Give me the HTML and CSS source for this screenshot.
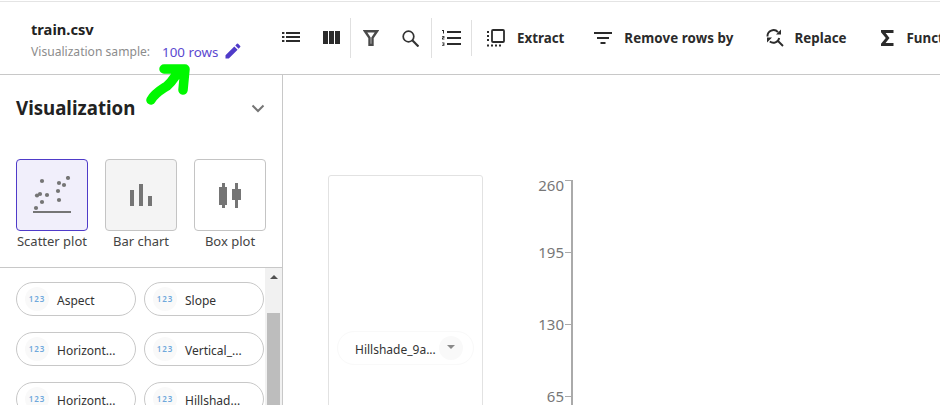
FILE: index.html
```html
<!DOCTYPE html>
<html>
<head>
  <title>train.csv</title>
  <meta name="viewport" content="width=device-width, initial-scale=1">
  <link rel="stylesheet" href="styles.css">
</head>
<body>
  <div class="app">
    <div class="topbar">
      <div class="dataset">
        <div class="dataset-name">train.csv</div>
        <div class="dataset-sample">
          <span class="sample-label">Visualization sample:</span>
          <span class="sample-link">100 rows</span>
          <svg class="pencil" width="16" height="16" viewBox="0 0 16 16"><path fill="#4f3bc9" d="M0.5 12.2V15.5H3.8L12.6 6.7 9.3 3.4ZM15.2 4.1a.9.9 0 0 0 0-1.2L13.1.8a.9.9 0 0 0-1.2 0L10.3 2.4 13.6 5.7Z"/></svg>
        </div>
      </div>
      <div class="tools">
        <button class="tool tool-list">
          <svg width="18" height="10" viewBox="0 0 18 10"><path fill="#2b2b2b" d="M0 0h2.400v2H0zM4 0h14v2H4zM0 4h2.400v2H0zM4 4h14v2H4zM0 8h2.400v2H0zM4 8h14v2H4z"/></svg>
        </button>
        <button class="tool tool-columns">
          <svg width="17" height="13" viewBox="0 0 17 13"><path fill="#2b2b2b" d="M0 0h5v13H0zM6 0h5v13H6zM12 0h5v13h-5z"/></svg>
        </button>
        <span class="sep"></span>
        <button class="tool tool-filter">
          <svg width="16" height="16" viewBox="0 0 16 16"><path fill="none" stroke="#4a4a4a" stroke-width="2.400" d="M2 1.200h12L9.500 7.800V15H6.500V7.800Z"/></svg>
        </button>
        <button class="tool tool-search">
          <svg width="17" height="17" viewBox="0 0 17 17"><circle cx="6.500" cy="6.500" r="5.300" fill="none" stroke="#333" stroke-width="1.700"/><path stroke="#333" stroke-width="2.200" d="M10.300 10.300L16.500 16.500"/></svg>
        </button>
        <span class="sep"></span>
        <button class="tool tool-number">
          <svg width="19" height="16" viewBox="0 0 19 16"><path fill="#2b2b2b" d="M5 1h14v2H5zM5 7h14v2H5zM5 13h14v2H5zM0 0h2v3.400H1V1H0zM0 6h2.400v2H1v.6h1.400v.8H0V7.400h1.400V6.800H0zM0 12.500h2.400v3.300H0V15h1.400v-.4H.6v-.7h.8v-.6H0z"/></svg>
        </button>
        <span class="sep sep-short"></span>
        <button class="tool tool-text tool-extract">
          <svg width="18" height="18" viewBox="0 0 18 18"><rect x="5" y="1" width="12" height="12" rx="1" fill="none" stroke="#2b2b2b" stroke-width="1.800"/><path fill="#2b2b2b" d="M0 2h2v2H0zM0 6h2v2H0zM0 10h2v2H0zM0 15.500h2v2H0zM4 15.500h2v2H4zM8 15.500h2v2H8zM12 15.500h2v2h-2z"/></svg>
          <span>Extract</span>
        </button>
        <button class="tool tool-text tool-remove">
          <svg width="18" height="12" viewBox="0 0 18 12"><path fill="#2b2b2b" d="M0 0h18v2H0zM3 5h12v2H3zM6.500 10h5v2h-5z"/></svg>
          <span>Remove rows by</span>
        </button>
        <button class="tool tool-text tool-replace">
          <svg width="18" height="18" viewBox="0 0 18 18"><path fill="none" stroke="#2b2b2b" stroke-width="1.900" d="M1.500 7.500A6 6 0 0 1 12 3.200M13.200 9A6 6 0 0 1 3.800 12.600M11.500 11.500L17 17"/><path fill="#2b2b2b" d="M10 5.500h5V.5zM1 8.500h5l-5 5z"/></svg>
          <span>Replace</span>
        </button>
        <button class="tool tool-text tool-sigma">
          <svg width="13" height="16" viewBox="0 0 13 16"><path fill="#2b2b2b" d="M0 0h12.500v3H4.600L8.500 8 4.600 13h7.900v3H0v-2.200L4.800 8 0 2.200Z"/></svg>
          <span>Functions</span>
        </button>
      </div>
    </div>

    <div class="main">
      <div class="sidebar">
        <div class="side-head">
          <h2>Visualization</h2>
          <svg width="14" height="9" viewBox="0 0 14 9"><path fill="none" stroke="#757575" stroke-width="2" d="M1.500 1.500L7 7l5.500-5.500"/></svg>
        </div>
        <div class="chart-types">
          <div class="chart-type">
            <div class="chart-tile tile-active">
              <svg width="38" height="38" viewBox="0 0 38 38"><g fill="#757575"><circle cx="9" cy="5" r="2.100"/><circle cx="26" cy="7" r="2.100"/><circle cx="31" cy="9" r="2.100"/><circle cx="35" cy="2" r="2.100"/><circle cx="25" cy="15" r="2.100"/><circle cx="7" cy="18" r="2.100"/><circle cx="4" cy="19.500" r="2.100"/><circle cx="14" cy="19" r="2.100"/><circle cx="9" cy="26" r="2.100"/><circle cx="26" cy="24" r="2.100"/><circle cx="3" cy="32" r="2.100"/></g><path fill="#757575" d="M0 35h38v2H0z"/></svg>
            </div>
            <span>Scatter plot</span>
          </div>
          <div class="chart-type">
            <div class="chart-tile tile-hover">
              <svg width="22" height="22" viewBox="0 0 22 22"><path fill="#757575" d="M0 6h4v16H0zM9 0h4v22H9zM18 12h4v10h-4z"/></svg>
            </div>
            <span>Bar chart</span>
          </div>
          <div class="chart-type">
            <div class="chart-tile">
              <svg width="22" height="25" viewBox="0 0 22 25"><path fill="#757575" d="M3 0h3v4h2v18H6v3H3v-3H0V4h3zM16 0h3v6h3v11h-3v8h-3v-8h-3V6h3z"/></svg>
            </div>
            <span>Box plot</span>
          </div>
        </div>
        <div class="fields">
          <div class="field-grid">
            <div class="field"><span class="field-badge">123</span><span class="field-name">Aspect</span></div>
            <div class="field"><span class="field-badge">123</span><span class="field-name">Slope</span></div>
            <div class="field"><span class="field-badge">123</span><span class="field-name">Horizont...</span></div>
            <div class="field"><span class="field-badge">123</span><span class="field-name">Vertical_...</span></div>
            <div class="field"><span class="field-badge">123</span><span class="field-name">Horizont...</span></div>
            <div class="field"><span class="field-badge">123</span><span class="field-name">Hillshad...</span></div>
          </div>
          <div class="scrollbar">
            <div class="scroll-arrow"></div>
            <div class="scroll-thumb"></div>
          </div>
        </div>
      </div>

      <div class="canvas">
        <div class="y-shelf">
          <div class="y-pill">
            <span class="y-pill-name">Hillshade_9a...</span>
            <span class="y-pill-caret"></span>
          </div>
        </div>
        <div class="axis">
          <div class="tick tick-top"><span>260</span><i></i></div>
          <div class="tick"><span>195</span><i></i></div>
          <div class="tick"><span>130</span><i></i></div>
          <div class="tick"><span>65</span><i></i></div>
        </div>
      </div>
    </div>

    <svg class="arrow" width="52" height="44" viewBox="0 0 52 44"><path fill="none" stroke="#00f800" stroke-width="9.500" stroke-linecap="round" stroke-linejoin="round" d="M8 38C12 31 18 28 24 24 30 19 32 14 36 9M21 7H42L40 28"/></svg>
  </div>
</body>
</html>
```

FILE: styles.css
```css
* {
  box-sizing: border-box;
}

body {
  margin: 0;
  padding-top: 1px;
  font-family: "Noto Sans", sans-serif;
  color: #222;
  background: #fff;
}

.app {
  position: relative;
  width: 940px;
  height: 404px;
  overflow: hidden;
  display: flex;
  flex-direction: column;
  border-top: 1px solid #e4e4e4;
}

/* top bar */
.topbar {
  flex: none;
  height: 73px;
  display: flex;
  border-bottom: 1px solid #c8c8c8;
}

.dataset {
  flex: none;
  width: 282px;
  padding: 16px 0 0 31px;
}

.dataset-name {
  font-size: 14.67px;
  font-weight: 700;
  line-height: 22px;
  color: #222;
}

.dataset-sample {
  display: flex;
  align-items: center;
  margin-top: 2px;
  font-size: 12.1px;
  line-height: 20px;
  white-space: nowrap;
}

.sample-label {
  color: #8c8c8c;
}

.sample-link {
  margin-left: 12px;
  font-size: 13.33px;
  color: #5b48d0;
}

.pencil {
  margin: 0 0 2px 7px;
}

.tools {
  display: flex;
  align-items: center;
  white-space: nowrap;
  height: 72px;
}

.tool {
  display: flex;
  align-items: center;
  padding: 0;
  border: 0;
  background: none;
  font-family: inherit;
  font-size: 13.33px;
  font-weight: 700;
  color: #2b2b2b;
}

.tool-text {
  gap: 12px;
}

.tool-list { margin-bottom: 2px; }
.tool-columns { margin: 0 0 2px 23px; }
.tool-filter { margin-left: 12px; }
.tool-search { margin-left: 23px; }
.tool-number { margin-left: 10px; }
.tool-extract { margin-left: 15px; }
.tool-remove { margin-left: 30px; letter-spacing: 0.1px; }
.tool-replace { margin-left: 32px; letter-spacing: 0; gap: 11px; }
.tool-sigma { margin-left: 34px; gap: 13px; }

.sep {
  flex: none;
  width: 1px;
  height: 40px;
  margin-left: 12px;
  background: #e0e0e0;
}

.tool-columns + .sep {
  margin-left: 10px;
}

.sep-short {
  height: 36px;
  margin-left: 10px;
}

/* sidebar */
.main {
  flex: 1;
  min-height: 0;
  display: flex;
}

.sidebar {
  flex: none;
  width: 283px;
  display: flex;
  flex-direction: column;
  border-right: 1px solid #c8c8c8;
}

.side-head {
  display: flex;
  align-items: center;
  justify-content: space-between;
  padding: 19px 17px 0 16px;
}

.side-head h2 {
  margin: 0;
  font-size: 18.67px;
  font-weight: 700;
  line-height: 28px;
  color: #222;
}

.chart-types {
  display: flex;
  gap: 17px;
  padding: 37px 0 0 16px;
  height: 146px;
  flex: none;
  border-bottom: 1px solid #c8c8c8;
}

.chart-type {
  width: 72px;
  display: flex;
  flex-direction: column;
  align-items: center;
  font-size: 13px;
  line-height: 20px;
  color: #444;
  white-space: nowrap;
}

.chart-tile {
  width: 72px;
  height: 72px;
  display: flex;
  align-items: center;
  justify-content: center;
  border: 1px solid #c4c4c4;
  border-radius: 4px;
  background: #fff;
}

.tile-active {
  border-color: #4f3bc9;
  background: #f1effb;
}

.tile-hover {
  background: #f4f4f4;
}

.fields {
  flex: 1;
  min-height: 0;
  display: flex;
  justify-content: space-between;
  overflow: hidden;
}

.field-grid {
  display: grid;
  grid-template-columns: 120px 120px;
  grid-auto-rows: 34px;
  column-gap: 8px;
  row-gap: 16px;
  padding: 14px 0 0 16px;
}

.field {
  display: flex;
  align-items: center;
  padding-left: 8px;
  border: 1px solid #c8c8c8;
  border-radius: 17px;
  font-size: 12px;
  color: #333;
}

.field-badge {
  flex: none;
  width: 24px;
  height: 24px;
  border-radius: 50%;
  background: #f9f9f9;
  color: #6fa8dc;
  font-size: 8px;
  font-weight: 600;
  line-height: 23px;
  text-align: center;
  letter-spacing: 1px;
}

.field-name {
  margin: 2px 0 0 8px;
  white-space: nowrap;
}

.scrollbar {
  flex: none;
  width: 17px;
  background: #f1f1f1;
  padding: 0 2px;
}

.scroll-arrow {
  width: 0;
  height: 0;
  margin: 7px auto 0;
  border-left: 4px solid transparent;
  border-right: 4px solid transparent;
  border-bottom: 4px solid #505050;
}

.scroll-thumb {
  height: 100px;
  margin-top: 34px;
  background: #bdbdbd;
}

/* chart area */
.canvas {
  flex: 1;
  min-width: 0;
  display: flex;
  align-items: flex-start;
  padding: 100px 0 0 45px;
}

.y-shelf {
  flex: none;
  width: 155px;
  height: 300px;
  padding: 155px 0 0 8px;
  border: 1px solid #e2e2e2;
  border-radius: 3px;
}

.y-pill {
  display: flex;
  align-items: center;
  justify-content: space-between;
  width: 137px;
  height: 34px;
  padding: 0 11px 0 17px;
  border: 1px solid #f9f9f9;
  border-radius: 17px;
  font-size: 12px;
  color: #333;
  white-space: nowrap;
}

.y-pill-name {
  margin-top: 2px;
}

.y-pill-caret {
  position: relative;
  flex: none;
  width: 24px;
  height: 24px;
  border-radius: 50%;
  background: #f9f9f9;
  margin-right: -1px;
}

.y-pill-caret::after {
  content: "";
  position: absolute;
  left: 8px;
  top: 9px;
  border-left: 4px solid transparent;
  border-right: 4px solid transparent;
  border-top: 4px solid #8a8a8a;
}

.axis {
  flex: none;
  width: 35px;
  height: 300px;
  margin: 5px 0 0 55px;
  border-right: 2px solid #aaa;
  display: flex;
  flex-direction: column;
}

.tick {
  flex: none;
  height: 72px;
  display: flex;
  justify-content: flex-end;
  align-items: flex-start;
  gap: 1px;
  font-size: 15px;
  line-height: 14px;
  color: #777;
}

.tick span {
  margin-top: -7px;
}

.tick-top span {
  margin-top: -2px;
}

.tick i {
  width: 6px;
  height: 1px;
  background: #aaa;
  flex: none;
}

.arrow {
  position: absolute;
  left: 143px;
  top: 60px;
}
```
